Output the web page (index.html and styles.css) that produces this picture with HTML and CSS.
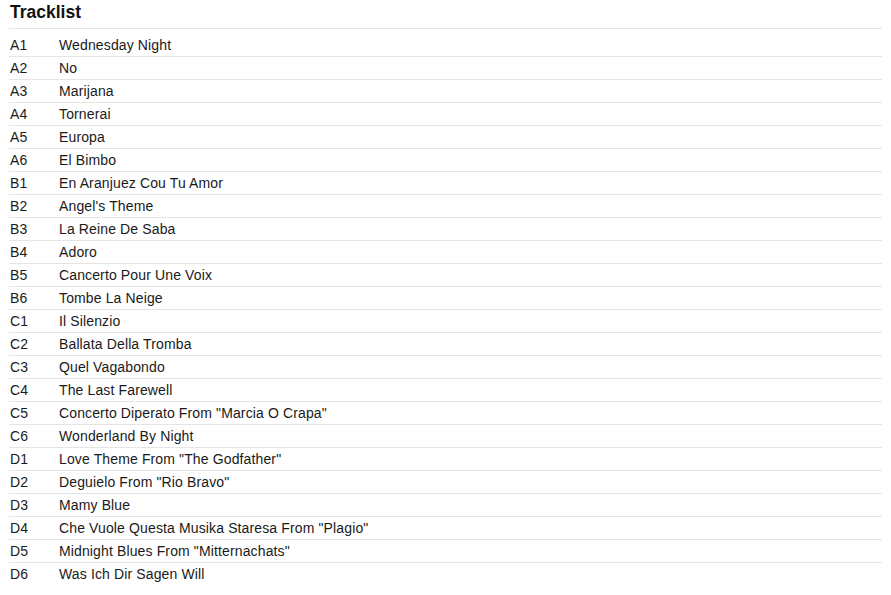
FILE: index.html
```html
<!DOCTYPE html>
<html lang="en">
<head>
  <meta charset="UTF-8" />
  <title>Tracklist</title>
  <link rel="stylesheet" href="styles.css">
</head>
<body>

  <div class="tracklist">
    <h2>Tracklist</h2>

    <table class="tracks">
      <tr><td class="pos">A1</td><td class="title">Wednesday Night</td></tr>
      <tr><td class="pos">A2</td><td class="title">No</td></tr>
      <tr><td class="pos">A3</td><td class="title">Marijana</td></tr>
      <tr><td class="pos">A4</td><td class="title">Tornerai</td></tr>
      <tr><td class="pos">A5</td><td class="title">Europa</td></tr>
      <tr><td class="pos">A6</td><td class="title">El Bimbo</td></tr>
      <tr><td class="pos">B1</td><td class="title">En Aranjuez Cou Tu Amor</td></tr>
      <tr><td class="pos">B2</td><td class="title">Angel's Theme</td></tr>
      <tr><td class="pos">B3</td><td class="title">La Reine De Saba</td></tr>
      <tr><td class="pos">B4</td><td class="title">Adoro</td></tr>
      <tr><td class="pos">B5</td><td class="title">Cancerto Pour Une Voix</td></tr>
      <tr><td class="pos">B6</td><td class="title">Tombe La Neige</td></tr>
      <tr><td class="pos">C1</td><td class="title">Il Silenzio</td></tr>
      <tr><td class="pos">C2</td><td class="title">Ballata Della Tromba</td></tr>
      <tr><td class="pos">C3</td><td class="title">Quel Vagabondo</td></tr>
      <tr><td class="pos">C4</td><td class="title">The Last Farewell</td></tr>
      <tr><td class="pos">C5</td><td class="title">Concerto Diperato From "Marcia O Crapa"</td></tr>
      <tr><td class="pos">C6</td><td class="title">Wonderland By Night</td></tr>
      <tr><td class="pos">D1</td><td class="title">Love Theme From "The Godfather"</td></tr>
      <tr><td class="pos">D2</td><td class="title">Deguielo From "Rio Bravo"</td></tr>
      <tr><td class="pos">D3</td><td class="title">Mamy Blue</td></tr>
      <tr><td class="pos">D4</td><td class="title">Che Vuole Questa Musika Staresa From "Plagio"</td></tr>
      <tr><td class="pos">D5</td><td class="title">Midnight Blues From "Mitternachats"</td></tr>
      <tr><td class="pos">D6</td><td class="title">Was Ich Dir Sagen Will</td></tr>
    </table>
  </div>

</body>
</html>
```

FILE: styles.css
```css
body {
  font-family: 'Liberation Sans', Arial, sans-serif;
  background-color: #fff;
  color: #1a1a1a;
  margin: 0;
  padding: 0;
}

.tracklist {
  padding: 0 9px;
}

.tracklist h2 {
  margin: 0;
  padding: 2px 1px 6px;
  font-size: 17.5px;
  line-height: 20px;
  font-weight: bold;
  color: #111;
  border-bottom: 1px solid #e5e5e5;
}

.tracks {
  width: 100%;
  margin-top: 5px;
  border-collapse: collapse;
  font-size: 14px;
  letter-spacing: 0.13px;
}

.tracks td {
  height: 22px;
  padding: 0 0 0 1px;
  line-height: 22px;
  vertical-align: middle;
}

.tracks tr {
  border-bottom: 1px solid #e5e5e5;
}

.tracks tr:last-child {
  border-bottom: none;
}

.tracks .pos {
  width: 48px;
}
```
